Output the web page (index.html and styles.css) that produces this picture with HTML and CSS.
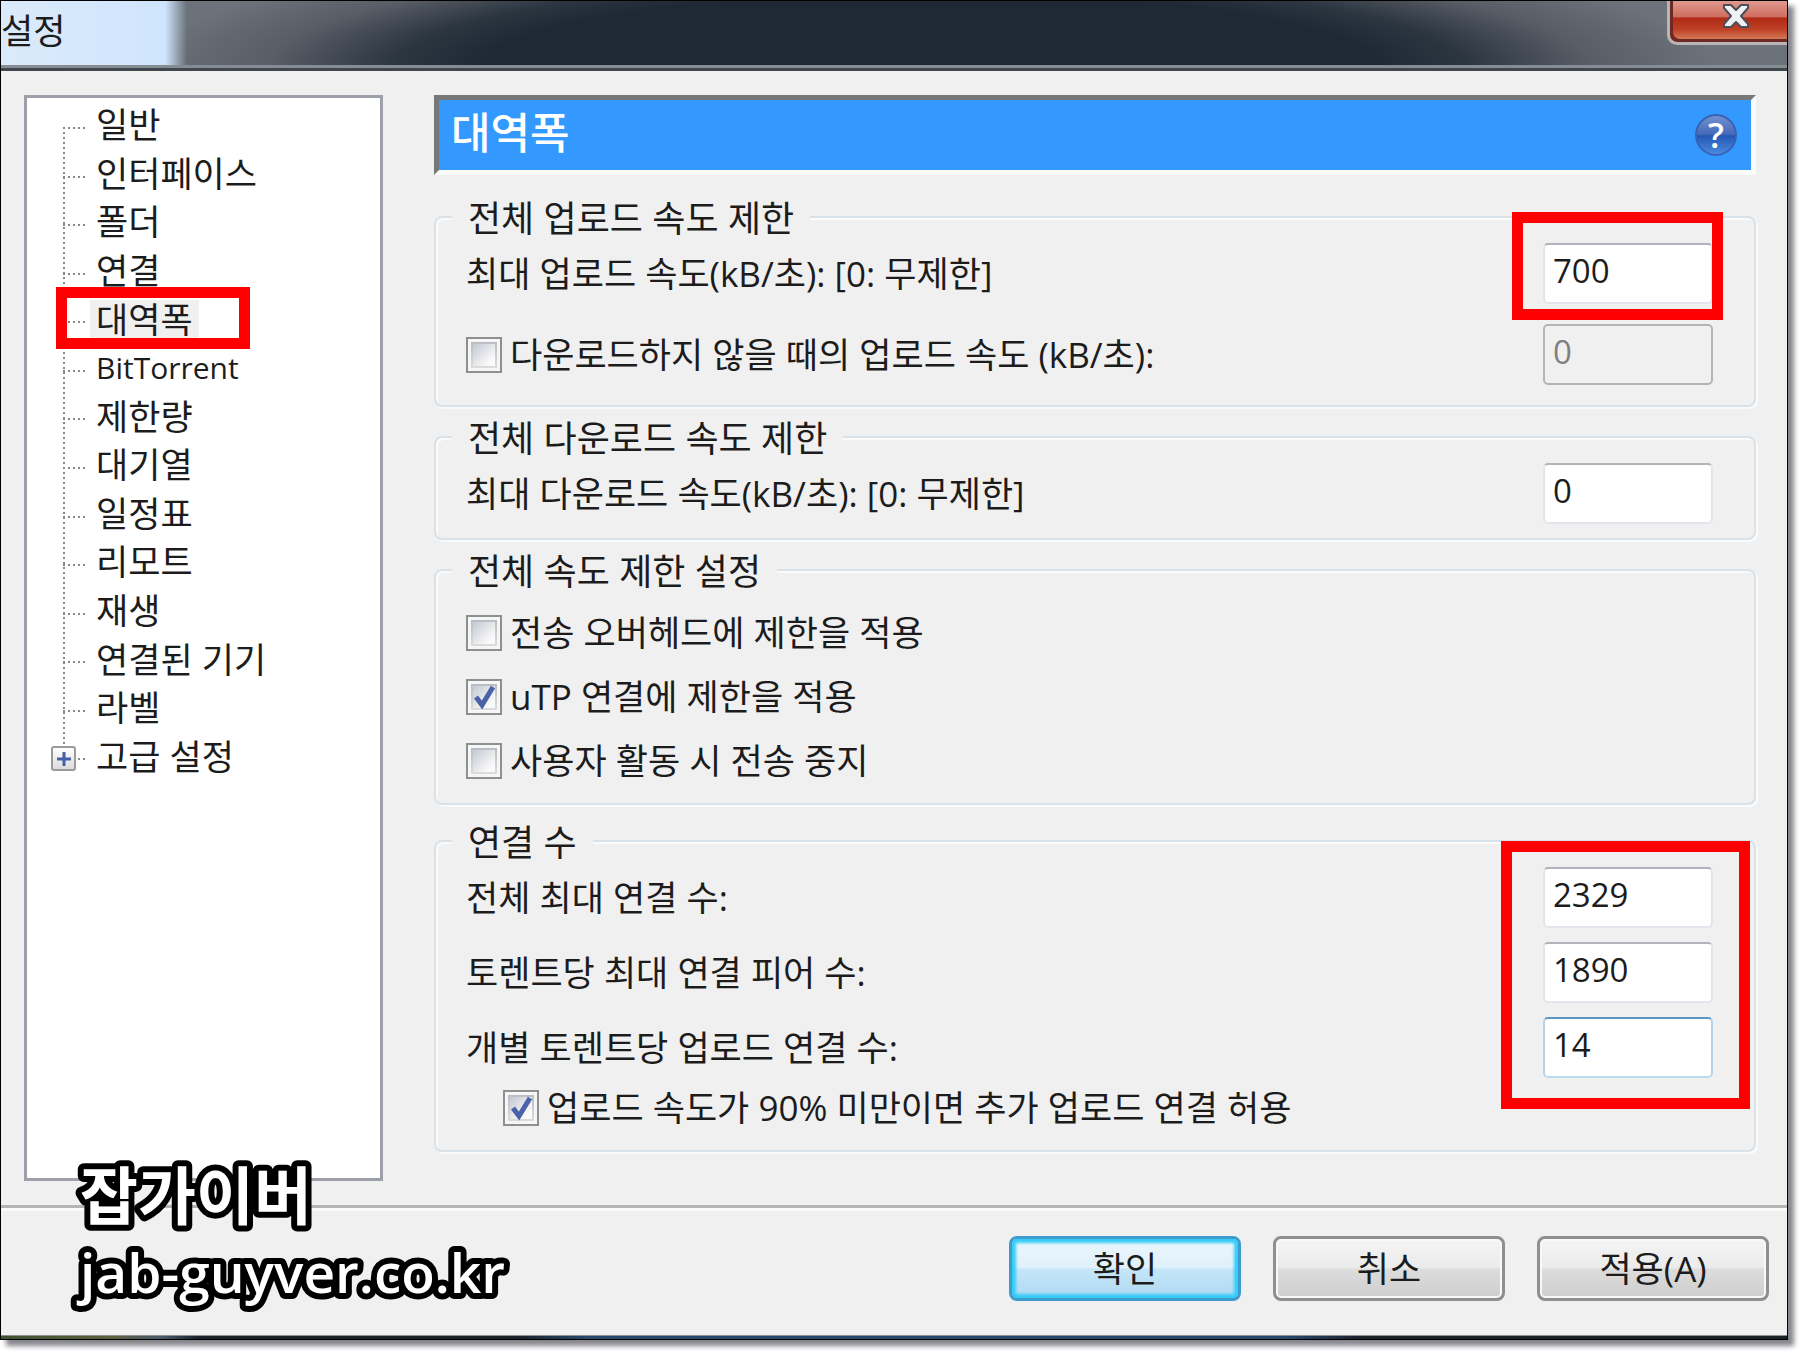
FILE: index.html
```html
<!DOCTYPE html>
<html lang="ko">
<head>
    <meta charset="UTF-8">
    <meta name="viewport" content="width=device-width, initial-scale=1.0">
    <title>설정</title>
    <link rel="stylesheet" href="styles.css">
</head>
<body>
    <div class="window">
        <header class="titlebar">
            <h1 class="titlebar-text">설정</h1>
            <button class="close" type="button" aria-label="닫기">
                <svg viewBox="0 0 30 28" width="30" height="28">
                    <path d="M3 3h7l5 5 5-5h7v3l-7 8 7 8v3h-7l-5-5-5 5H3v-3l7-8-7-8z" fill="#f2f2f2" stroke="#4b4f5c" stroke-width="2" stroke-linejoin="round"/>
                </svg>
            </button>
        </header>

        <main class="content">
            <nav class="tree">
                <ul class="tree-list">
                    <li class="tree-item"><a href="#">일반</a></li>
                    <li class="tree-item"><a href="#">인터페이스</a></li>
                    <li class="tree-item"><a href="#">폴더</a></li>
                    <li class="tree-item"><a href="#">연결</a></li>
                    <li class="tree-item selected"><a href="#">대역폭</a><span class="mark mark-tree"></span></li>
                    <li class="tree-item latin"><a href="#">BitTorrent</a></li>
                    <li class="tree-item"><a href="#">제한량</a></li>
                    <li class="tree-item"><a href="#">대기열</a></li>
                    <li class="tree-item"><a href="#">일정표</a></li>
                    <li class="tree-item"><a href="#">리모트</a></li>
                    <li class="tree-item"><a href="#">재생</a></li>
                    <li class="tree-item"><a href="#">연결된 기기</a></li>
                    <li class="tree-item"><a href="#">라벨</a></li>
                    <li class="tree-item">
                        <button class="expand" type="button" aria-label="펼치기">
                            <svg viewBox="0 0 14 14" width="14" height="14">
                                <path d="M7 0v14M0 7h14" stroke="#4560a8" stroke-width="3"/>
                            </svg>
                        </button>
                        <a href="#">고급 설정</a>
                    </li>
                </ul>
            </nav>

            <section class="pane">
                <div class="pane-header">
                    <h2>대역폭</h2>
                    <button class="help" type="button">?</button>
                </div>

                <form class="groups">
                    <fieldset class="group">
                        <legend>전체 업로드 속도 제한</legend>
                        <div class="rows upload">
                            <div class="row">
                                <label for="maxUp">최대 업로드 속도(kB/초): [0: 무제한]</label>
                                <span class="field">
                                    <input class="number" type="text" id="maxUp" value="700">
                                    <span class="mark mark-upload"></span>
                                </span>
                            </div>
                            <div class="row">
                                <label class="check"><input type="checkbox">다운로드하지 않을 때의 업로드 속도 (kB/초):</label>
                                <input class="number" type="text" value="0" aria-label="업로드 속도" disabled>
                            </div>
                        </div>
                    </fieldset>

                    <fieldset class="group">
                        <legend>전체 다운로드 속도 제한</legend>
                        <div class="rows download">
                            <div class="row">
                                <label for="maxDown">최대 다운로드 속도(kB/초): [0: 무제한]</label>
                                <input class="number" type="text" id="maxDown" value="0">
                            </div>
                        </div>
                    </fieldset>

                    <fieldset class="group">
                        <legend>전체 속도 제한 설정</legend>
                        <div class="rows options">
                            <label class="check"><input type="checkbox">전송 오버헤드에 제한을 적용</label>
                            <label class="check"><input type="checkbox" checked>uTP 연결에 제한을 적용</label>
                            <label class="check"><input type="checkbox">사용자 활동 시 전송 중지</label>
                        </div>
                    </fieldset>

                    <fieldset class="group">
                        <legend>연결 수</legend>
                        <div class="rows connections">
                            <div class="row">
                                <label for="globalMax">전체 최대 연결 수:</label>
                                <input class="number" type="text" id="globalMax" value="2329">
                            </div>
                            <div class="row">
                                <label for="peerMax">토렌트당 최대 연결 피어 수:</label>
                                <input class="number" type="text" id="peerMax" value="1890">
                            </div>
                            <div class="row">
                                <label for="slotMax">개별 토렌트당 업로드 연결 수:</label>
                                <input class="number active" type="text" id="slotMax" value="14">
                            </div>
                            <span class="mark mark-connections"></span>
                        </div>
                        <label class="check sub"><input type="checkbox" checked>업로드 속도가 90% 미만이면 추가 업로드 연결 허용</label>
                    </fieldset>
                </form>
            </section>
        </main>

        <footer class="footer">
            <button class="btn btn-default" type="button">확인</button>
            <button class="btn" type="button">취소</button>
            <button class="btn" type="button">적용(A)</button>
        </footer>
        <div class="frame-bottom"></div>

        <svg class="watermark" viewBox="0 0 480 170" width="480" height="170">
            <text class="watermark-name" x="12" y="62">잡가이버</text>
            <text class="watermark-url" x="12" y="136">jab-guyver.co.kr</text>
        </svg>
    </div>
</body>
</html>
```
FILE: styles.css
```css
* {
    margin: 0;
    padding: 0;
    box-sizing: border-box;
}

body {
    min-height: 100vh;
    background: white;
    color: #1c1c1c;
    display: flex;
    padding: 0 12px 12px 0;
    font-family: 'Open Sans', 'Noto Sans CJK KR', sans-serif;
    font-size: 35px;
    line-height: 40px;
}

button,
input {
    font: inherit;
    color: inherit;
}

.window {
    position: relative;
    flex: 1;
    display: flex;
    flex-direction: column;
    background: #f0f0f0;
    border: 1px solid black;
    box-shadow: 6px 6px 5px #85858c;
}

/* title bar */
.titlebar {
    height: 70px;
    display: flex;
    justify-content: space-between;
    align-items: flex-start;
    border-bottom: 3px solid #42474f;
    box-shadow: inset 0 -3px 0 #868c94;
    background:
        linear-gradient(to right, #dbeafb, #cfe5fd 164px, transparent 186px),
        radial-gradient(ellipse 50% 150px at 52% 100%, #1f2935 50%, #2c3641 60%, #595d66 74%, #6b7279 88%);
}

.titlebar-text {
    font-size: 35px;
    font-weight: 400;
    line-height: 60px;
}

.close {
    width: 120px;
    height: 44px;
    display: flex;
    justify-content: center;
    padding: 1px 0 0 14px;
    border: 3px solid #b9b5b7;
    border-width: 0 0 3px 3px;
    border-radius: 0 0 0 10px;
    box-shadow: inset 3px -3px 0 #6e2a22;
    background: linear-gradient(#e0998f, #cf6e60 38%, #b02a15 42%, #c04228 70%, #d98a68);
}

/* content */
.content {
    flex: 1;
    display: flex;
    gap: 51px;
    padding: 24px 31px 24px 23px;
}

.tree {
    width: 359px;
    background: white;
    border: 3px solid #9da0a8;
    padding: 3px 0 0 35px;
}

.tree-list {
    height: 680px;
    display: grid;
    grid-auto-rows: 1fr;
    list-style: none;
    background: repeating-linear-gradient(#888 0 2px, transparent 2px 5px) 1px 26px / 2px 628px no-repeat;
}

.tree-item {
    position: relative;
    display: flex;
    align-items: center;
    padding-left: 28px;
    background: repeating-linear-gradient(to right, #888 0 2px, transparent 2px 5px) 1px 26px / 25px 2px no-repeat;
}

.tree-item a {
    color: inherit;
    text-decoration: none;
    padding: 0 6px;
}

.tree-item.selected a {
    background: #f0f0f0;
}

.tree-item.latin {
    font-size: 30px;
}

.expand {
    position: absolute;
    left: -11px;
    top: 14px;
    width: 25px;
    height: 25px;
    display: grid;
    place-items: center;
    border: 2px solid #9a9a9a;
    border-radius: 3px;
    background: linear-gradient(#ffffff, #dcdcdc);
    box-shadow: 2px 0 0 white;
}

/* red highlight frames */
.mark {
    position: absolute;
    border: 11px solid #ff0000;
    pointer-events: none;
}

.mark-tree {
    left: -6px;
    top: -8px;
    width: 194px;
    height: 62px;
    z-index: 1;
}

.mark-upload {
    top: -31px;
    right: -10px;
    bottom: -16px;
    left: -31px;
}

.mark-connections {
    top: -20px;
    right: 4px;
    bottom: -31px;
    width: 249px;
}

.pane {
    flex: 1;
}

.pane-header {
    display: flex;
    justify-content: space-between;
    align-items: center;
    height: 80px;
    padding: 0 14px 0 12px;
    border: 5px solid;
    border-color: #787878 #fafafa #fafafa #787878;
    background: #3399ff;
    margin-bottom: 22px;
}

.pane-header h2 {
    font-size: 43px;
    font-weight: 500;
    padding-bottom: 4px;
    color: white;
}

.help {
    width: 42px;
    height: 42px;
    border: 2px solid #3a62b4;
    border-radius: 50%;
    background: linear-gradient(#7291d0, #4569b9 48%, #2458b4 52%, #4a8ade);
    color: white;
    font-size: 35px;
    font-weight: 600;
    line-height: 36px;
}

/* option groups */
.groups {
    display: flex;
    flex-direction: column;
    gap: 10px;
}

.group {
    min-width: 0;
    padding: 0 0 20px 16px;
    border: 2px solid #d8e2e8;
    border-radius: 8px;
    box-shadow: inset 2px 2px 0 #fafafa, 2px 2px 0 #fafafa;
}

.group:last-child {
    margin-top: 6px;
}

.group legend {
    padding: 3px 16px 0;
    font-size: 36px;
    line-height: 37px;
    background: #f0f0f0;
}

.rows {
    position: relative;
    display: flex;
    flex-direction: column;
    padding: 6px 41px 0 14px;
}

.upload {
    gap: 20px;
}

.download {
    margin-bottom: -6px;
}

.options {
    gap: 20px;
    padding-top: 21px;
}

.connections {
    gap: 14px;
}

.row {
    display: flex;
    justify-content: space-between;
    align-items: center;
}

.field {
    position: relative;
    display: flex;
}

.number {
    width: 170px;
    height: 61px;
    padding: 0 8px 6px;
    font-size: 33px;
    background: white;
    border: 2px solid #e2e5ec;
    border-top-color: #b2b4bc;
    border-radius: 5px;
    outline: none;
}

.number.active {
    border-color: #5f97c4 #b5d2e8 #b9dcee #b5d2e8;
}

.number:disabled {
    color: #808080;
    background: #f0f0f0;
    border-color: #b4b4b4;
}

.check {
    display: flex;
    align-items: center;
    gap: 8px;
    height: 44px;
}

.check input {
    appearance: none;
    width: 36px;
    height: 36px;
    border: 2px solid #8e9090;
    background:
        linear-gradient(135deg, #c4c9d2, #fafafa 80%) center / 22px 22px no-repeat,
        linear-gradient(#b9bcc4, #dcdcdc) center / 26px 26px no-repeat,
        #f6f6f6;
}

.check input:checked {
    background:
        url("data:image/svg+xml,%3Csvg xmlns='http://www.w3.org/2000/svg' viewBox='0 0 32 32'%3E%3Cpath d='M8 16l6 8L25 6' fill='none' stroke='%234a63a8' stroke-width='5'/%3E%3C/svg%3E") center / 32px 32px no-repeat,
        linear-gradient(135deg, #c4c9d2, #fafafa 80%) center / 22px 22px no-repeat,
        linear-gradient(#b9bcc4, #dcdcdc) center / 26px 26px no-repeat,
        #f6f6f6;
}

.check.sub {
    margin: 8px 0 0 51px;
}

/* bottom buttons */
.footer {
    display: flex;
    justify-content: flex-end;
    gap: 32px;
    padding: 28px 18px 34px;
    border-top: 3px solid #b4b4b4;
    box-shadow: inset 0 3px 0 #fafafa;
}

.frame-bottom {
    height: 4px;
    background: linear-gradient(to right, #3d5230, #5c5f3c 6%, #4a5a6c 9%, #1b222a 11%, #1b222a 29%, #27496e 33%, #27496e 72%, #1b222a 76%);
    border-top: 1px solid #8c8f93;
}

.btn {
    width: 232px;
    height: 65px;
    border: 3px solid #8f8f8f;
    border-radius: 8px;
    box-shadow: inset 0 0 0 2px #f8f8f8;
    background: linear-gradient(#f4f4f4, #ebebeb 48%, #dcdcdc 52%, #cecece);
}

.btn-default {
    border-color: #3c9ccd;
    box-shadow: inset 0 0 3px 4px #35cdf7;
    background: linear-gradient(#ecf6fd, #dff1fb 48%, #c3e5f8 52%, #b0daf3);
}

/* watermark over the window */
.watermark {
    position: absolute;
    left: 67px;
    bottom: 12px;
    fill: white;
    stroke: black;
    stroke-width: 12px;
    stroke-linejoin: round;
    paint-order: stroke fill;
}

.watermark-name {
    font-size: 63px;
    font-weight: 700;
}

.watermark-url {
    font-size: 55px;
    font-weight: 600;
}
```
